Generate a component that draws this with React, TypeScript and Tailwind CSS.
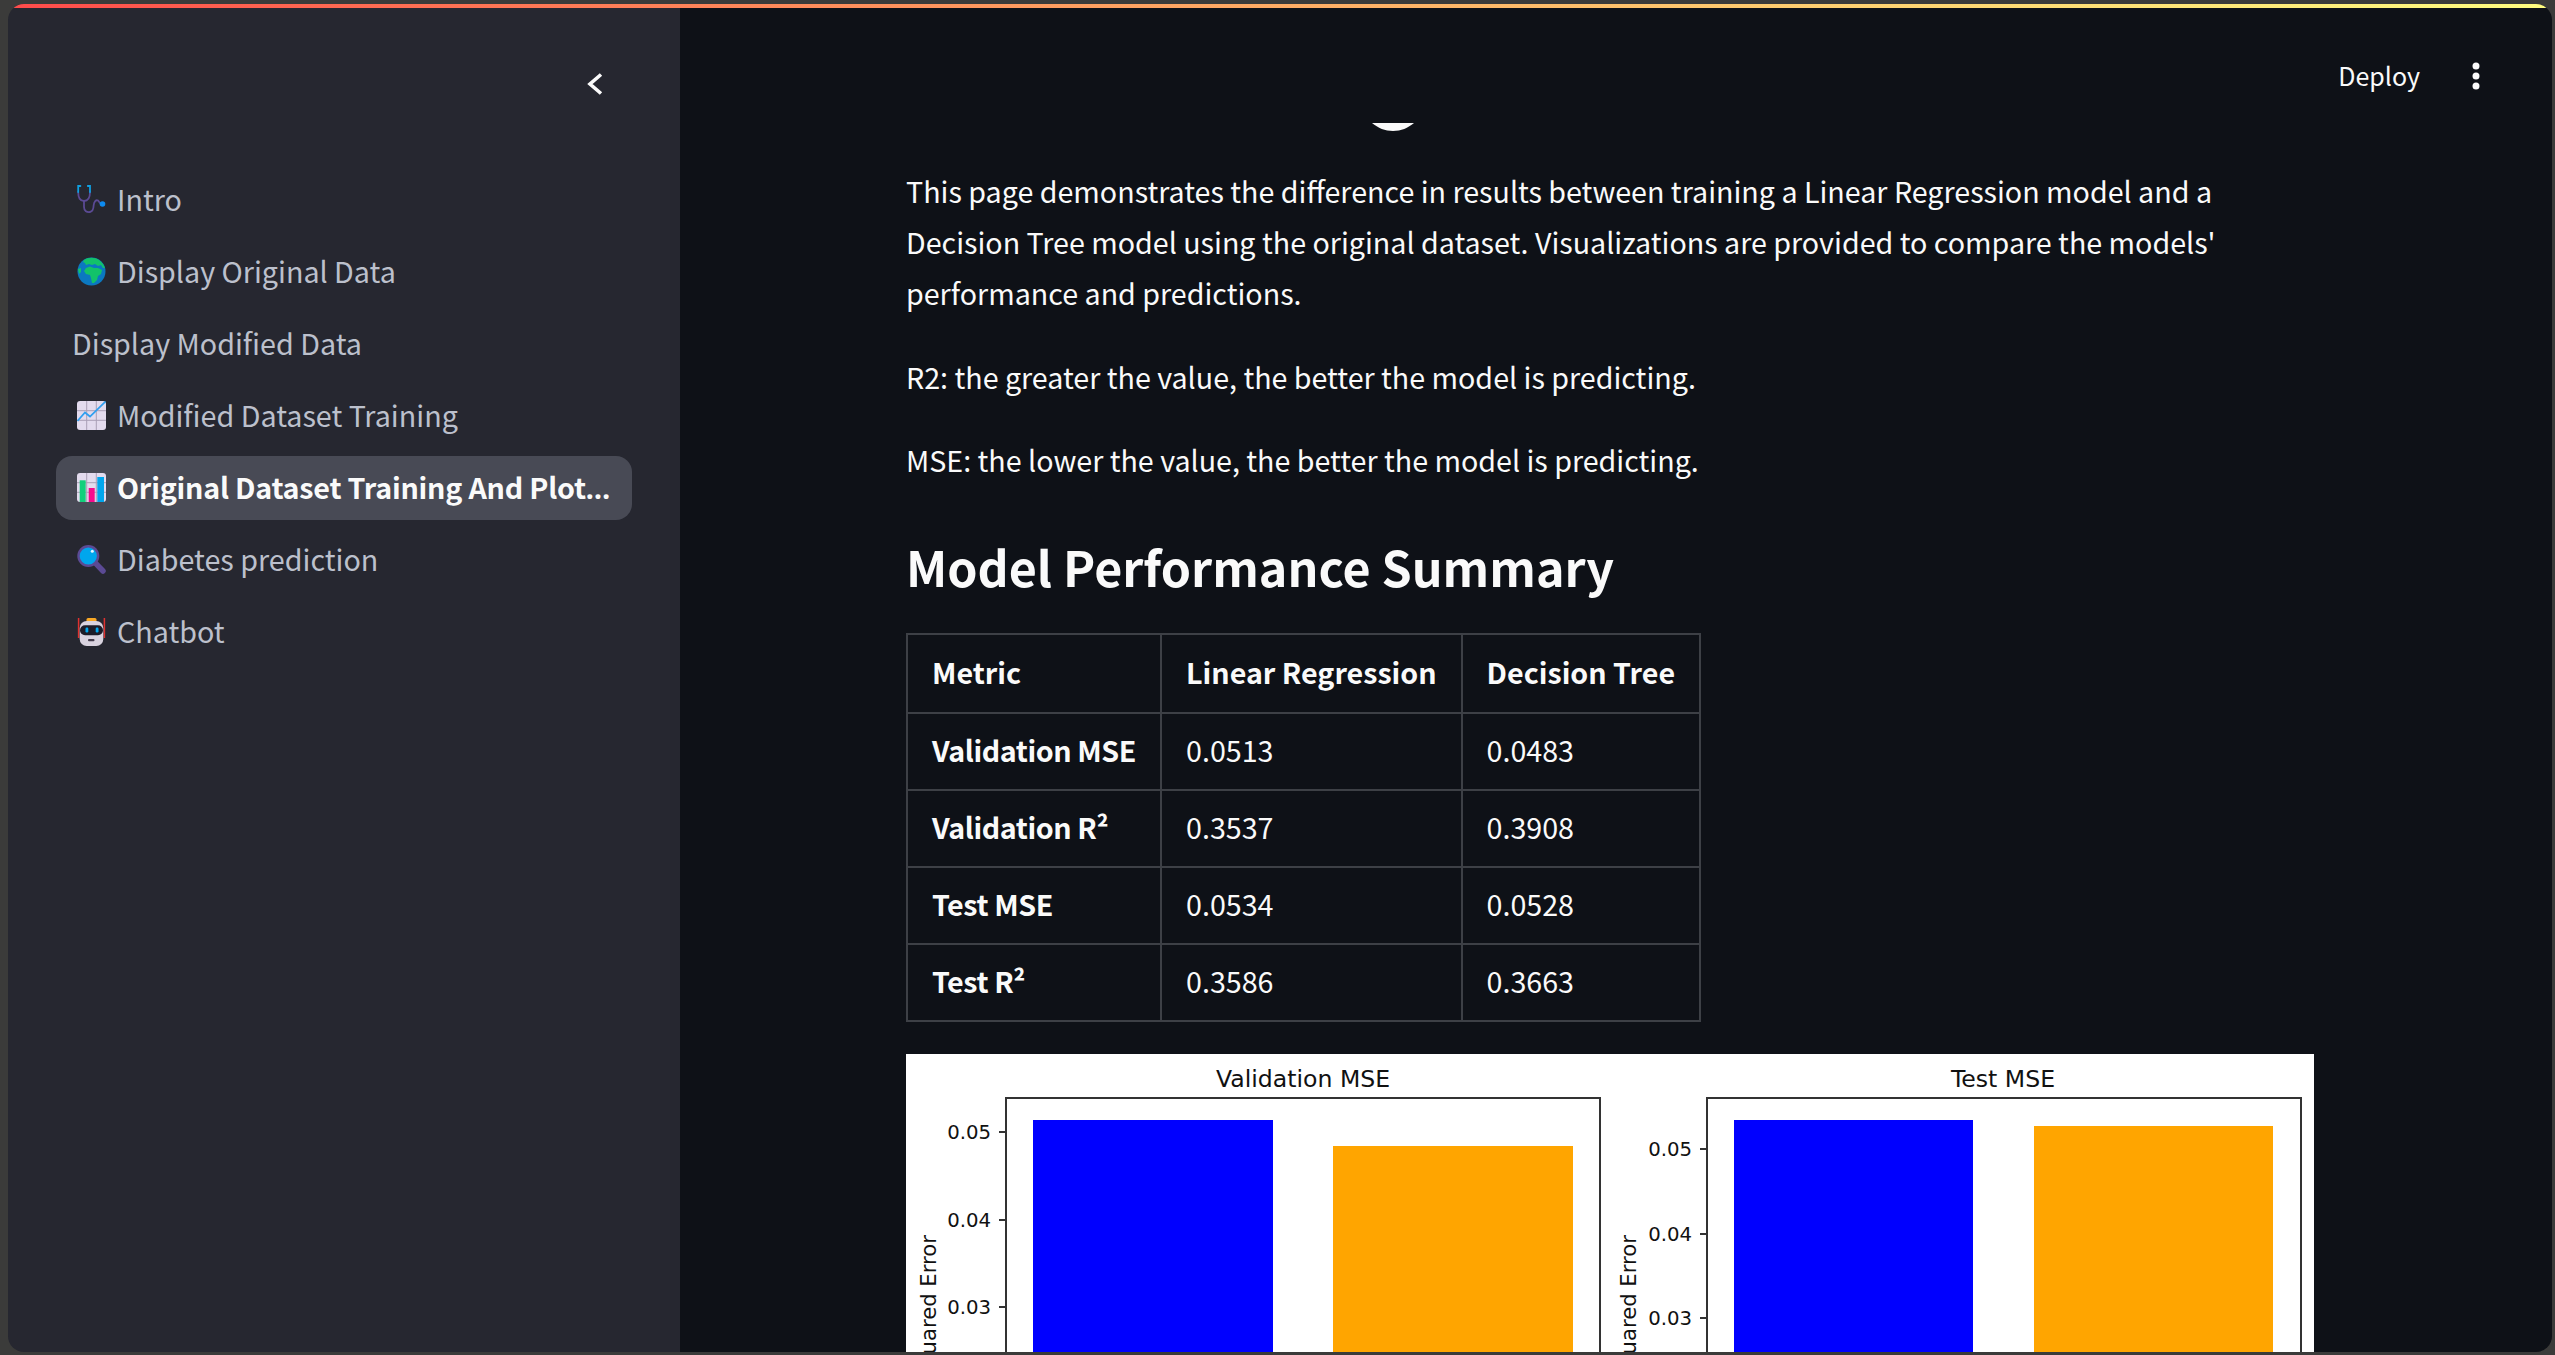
const SANS = "font-['Noto_Sans_CJK_SC','Noto_Sans_CJK_JP',sans-serif]";

function Stethoscope() {
  return (
    <svg viewBox="0 0 29 29" className="w-[29px] h-[29px] shrink-0 -translate-y-[1px]" fill="none" strokeLinecap="round">
      <path d="M1.2 7 C1.2 13 3 16 7 16 C11 16 13 13 13 7" stroke="#5b4a94" strokeWidth="1.8" />
      <path d="M3.4 1 H1.2 V7 M10.8 1 H13 V7" stroke="#0f9fe0" strokeWidth="1.8" />
      <path d="M7 16 V22 C7 26 10 27.5 13 27 C16 26.5 16.5 24 16.7 20 C17 16.5 19 14.5 21 15.5 L23 18" stroke="#5b4a94" strokeWidth="1.8" />
      <circle cx="25.5" cy="19" r="2.8" fill="#0d8bf0" />
    </svg>
  );
}

function Globe() {
  return (
    <svg viewBox="0 0 29 29" className="w-[29px] h-[29px] shrink-0 -translate-y-[1px]">
      <circle cx="14.5" cy="14.5" r="14" fill="#0b78c0" />
      <path d="M7 3 C11 0 18 0 22 3 C25 5 27 8 28 11 L26 11 L24 8 L21 9 L18 7 L15 8 L12 7 L9 8 L8 6 L6 5 Z" fill="#12c26a" />
      <path d="M9 11 L13 9.5 L17 11 L21 11 L25 13 L24 17 L21 19 L20 23 L17 26 L15 26 L14 21 L13 18 L9 17 L7 14 Z" fill="#12c26a" />
      <path d="M1 12 L4 11 L4 15 L2 17 Z" fill="#12c26a" />
    </svg>
  );
}

function LineChartIcon() {
  return (
    <svg viewBox="0 0 29 29" className="w-[29px] h-[29px] shrink-0 -translate-y-[1px]" fill="none">
      <rect x="0" y="0" width="29" height="29" rx="3" fill="#e3dbee" />
      <path d="M9.7 0 V29 M19.3 0 V29 M0 9.7 H29 M0 19.3 H29" stroke="#a99fb6" strokeWidth="1" />
      <path d="M0.5 20 L8 11.5 L13 15.5 L28.5 0.5" stroke="#2f9ff0" strokeWidth="1.7" />
    </svg>
  );
}

function BarChartIcon() {
  return (
    <svg viewBox="0 0 29 29" className="w-[29px] h-[29px] shrink-0 -translate-y-[1px]" fill="none">
      <rect x="0" y="0" width="29" height="29" rx="3" fill="#e3dbee" />
      <path d="M9.7 0 V29 M19.3 0 V29 M0 9.7 H29 M0 19.3 H29" stroke="#a99fb6" strokeWidth="1" />
      <rect x="2.7" y="7.3" width="6" height="21.7" fill="#12d07c" />
      <rect x="11.7" y="15" width="6" height="14" fill="#f70a8d" />
      <rect x="20.3" y="4" width="6.7" height="25" fill="#00a6ed" />
    </svg>
  );
}

function MagnifierIcon() {
  return (
    <svg viewBox="0 0 29 29" className="w-[29px] h-[29px] shrink-0 -translate-y-[1px]" fill="none">
      <path d="M18.7 18.3 L26 26" stroke="#5b4a94" strokeWidth="5.5" strokeLinecap="round" />
      <circle cx="11.3" cy="11" r="11" fill="#5b4a94" />
      <circle cx="11.3" cy="11" r="8.6" fill="#00a6ed" />
      <circle cx="15.3" cy="6.3" r="1.5" fill="#e6f6ff" />
    </svg>
  );
}

function RobotIcon() {
  return (
    <svg viewBox="0 0 29 29" className="w-[29px] h-[29px] shrink-0 -translate-y-[1px]" fill="none">
      <path d="M1.6 1 V21 M27.4 1 V21" stroke="#e0312f" strokeWidth="1.5" />
      <rect x="9.5" y="1" width="10" height="4" rx="1.5" fill="#f9a825" />
      <rect x="2.7" y="4" width="23.6" height="25" rx="7" fill="#d9d3df" />
      <rect x="3" y="8.3" width="23" height="10" rx="5" fill="#1c1c28" />
      <rect x="8.5" y="10.5" width="2.8" height="5" rx="1.2" fill="#00a6ed" />
      <rect x="18.7" y="10.5" width="2.8" height="5" rx="1.2" fill="#00a6ed" />
      <rect x="11" y="22" width="6.5" height="2.2" rx="1" fill="#433b4b" />
    </svg>
  );
}

const NAV = [
  { label: "Intro", icon: <Stethoscope /> },
  { label: "Display Original Data", icon: <Globe /> },
  { label: "Display Modified Data", icon: null },
  { label: "Modified Dataset Training", icon: <LineChartIcon /> },
  { label: "Original Dataset Training And Plot", icon: <BarChartIcon />, active: true },
  { label: "Diabetes prediction", icon: <MagnifierIcon /> },
  { label: "Chatbot", icon: <RobotIcon /> },
];

const ROWS = [
  ["Validation MSE", "0.0513", "0.0483"],
  ["Validation R²", "0.3537", "0.3908"],
  ["Test MSE", "0.0534", "0.0528"],
  ["Test R²", "0.3586", "0.3663"],
];

type ChartProps = {
  offset: number; title: string; titleX: number; boxL: number; boxR: number;
  blue: [number, number, number]; orange: [number, number, number];
  ticks: [string, number][]; labelX: number;
};

function Axis({ offset, title, titleX, boxL, boxR, blue, orange, ticks, labelX }: ChartProps) {
  const X = (v: number) => v - offset;
  const Y = (v: number) => v - 1054;
  return (
    <g fontFamily="'DejaVu Sans', sans-serif" fill="#111">
      <text x={X(titleX)} y={Y(1087)} fontSize="23.6" textAnchor="middle">{title}</text>
      <rect x={X(blue[0])} y={Y(blue[2])} width={blue[1] - blue[0]} height="400" fill="#0000ff" />
      <rect x={X(orange[0])} y={Y(orange[2])} width={orange[1] - orange[0]} height="400" fill="#ffa500" />
      <rect x={X(boxL)} y={Y(1098)} width={boxR - boxL} height="400" fill="none" stroke="#333" strokeWidth="2" />
      {ticks.map(([t, y]) => (
        <g key={t}>
          <line x1={X(boxL - 7)} x2={X(boxL)} y1={Y(y)} y2={Y(y)} stroke="#333" strokeWidth="2" />
          <text x={X(boxL - 15)} y={Y(y + 7)} fontSize="19.7" textAnchor="end">{t}</text>
        </g>
      ))}
      <text transform={`translate(${X(labelX)} ${Y(1235)}) rotate(-90)`} fontSize="21.2" textAnchor="end">Mean Squared Error</text>
    </g>
  );
}

function ChartImage() {
  return (
    <svg viewBox="0 0 1408 400" className="block w-[1408px] h-[400px] bg-white">
      <Axis offset={906} title="Validation MSE" titleX={1303} boxL={1006} boxR={1600}
        blue={[1033, 1273, 1120]} orange={[1333, 1573, 1146]}
        ticks={[["0.05", 1132], ["0.04", 1220], ["0.03", 1307]]} labelX={936} />
      <Axis offset={906} title="Test MSE" titleX={2003} boxL={1707} boxR={2301}
        blue={[1734, 1973, 1120]} orange={[2034, 2273, 1126]}
        ticks={[["0.05", 1149], ["0.04", 1234], ["0.03", 1318]]} labelX={1636} />
    </svg>
  );
}

export default function App() {
  return (
    <div className={`${SANS} w-[2555px] h-[1355px] overflow-hidden bg-[#3b3b3a] pt-[4px] pl-[8px] pr-[3px] pb-[3px]`}>
      <div className="relative flex h-full overflow-hidden rounded-[16px]">
        <div className="absolute top-0 left-0 right-0 z-10 h-[4px] bg-gradient-to-r from-[#ff4b4b] to-[#fffd80]" />
        <aside className="w-[672px] shrink-0 bg-[#262730] px-[48px]">
          <div className="flex h-[164px] justify-end pt-[69px] pr-[29px]">
            <svg viewBox="0 0 16 22" className="w-[16px] h-[22px]" fill="none">
              <path d="M14 1.5 L3 11 L14 20.5" stroke="#fafafa" strokeWidth="3.6" />
            </svg>
          </div>
          <nav className="flex flex-col gap-[8px]">
            {NAV.map((n) => (
              <div key={n.label} className={`flex h-[64px] items-center rounded-[16px] px-[16px] ${n.active ? "bg-[#484a55]" : ""}`}>
                {n.icon && <span className="ml-[5px] mr-[11px] flex shrink-0">{n.icon}</span>}
                <span className={`mb-[2px] whitespace-nowrap text-[28.7px] leading-[62px] ${n.active ? "font-bold tracking-[-0.23px] text-[#fafafa]" : "text-[#bcc0cc]"}`}>
                  {n.label}
                  {n.active && <span className="font-['Noto_Sans',sans-serif]">…</span>}
                </span>
              </div>
            ))}
          </nav>
        </aside>
        <main className="flex-1 bg-[#0e1117] pl-[226px] text-[#fafafa]">
          <div className="flex h-[119px] items-start justify-end pr-[72px] pt-[49px]">
            <span className="mr-[52px] text-[25px] leading-[44px]">Deploy</span>
            <svg viewBox="0 0 8 28" className="mt-[9px] h-[28px] w-[8px]" fill="#fafafa">
              <circle cx="4" cy="4" r="3.5" /><circle cx="4" cy="14" r="3.5" /><circle cx="4" cy="24" r="3.5" />
            </svg>
          </div>
          <svg viewBox="0 0 42 8" className="mb-[34px] ml-[466px] block h-[8px] w-[42px]" fill="#fafafa">
            <path d="M0 0 H42 C36 5 29 8 21 8 C13 8 6 5 0 0 Z" />
          </svg>
          <div className="w-[1408px]">
            <p className="mb-[32px] text-[28.65px] leading-[51.2px]">This page demonstrates the difference in results between training a Linear Regression model and a Decision Tree model using the original dataset. Visualizations are provided to compare the models' performance and predictions.</p>
            <p className="mb-[32px] text-[28.65px] leading-[51.2px]">R2: the greater the value, the better the model is predicting.</p>
            <p className="mb-[32px] text-[28.65px] leading-[51.2px]">MSE: the lower the value, the better the model is predicting.</p>
            <h2 className="mb-[18px] text-[48.4px] font-bold leading-[98px]">Model Performance Summary</h2>
            <table className="mb-[32px] border-collapse text-[28.65px] leading-[43px]">
              <thead>
                <tr>
                  {["Metric", "Linear Regression", "Decision Tree"].map((h) => (
                    <th key={h} className="border-2 border-[#3d4046] px-[24px] pt-[14px] pb-[18px] text-left font-bold leading-[45px]">{h}</th>
                  ))}
                </tr>
              </thead>
              <tbody>
                {ROWS.map((r) => (
                  <tr key={r[0]}>
                    <td className="border-2 border-[#3d4046] px-[24px] pt-[14px] pb-[18px] font-bold tracking-[-0.4px]">{r[0]}</td>
                    <td className="border-2 border-[#3d4046] px-[24px] pt-[14px] pb-[18px]">{r[1]}</td>
                    <td className="border-2 border-[#3d4046] px-[24px] pt-[14px] pb-[18px]">{r[2]}</td>
                  </tr>
                ))}
              </tbody>
            </table>
            <ChartImage />
          </div>
        </main>
      </div>
    </div>
  );
}
